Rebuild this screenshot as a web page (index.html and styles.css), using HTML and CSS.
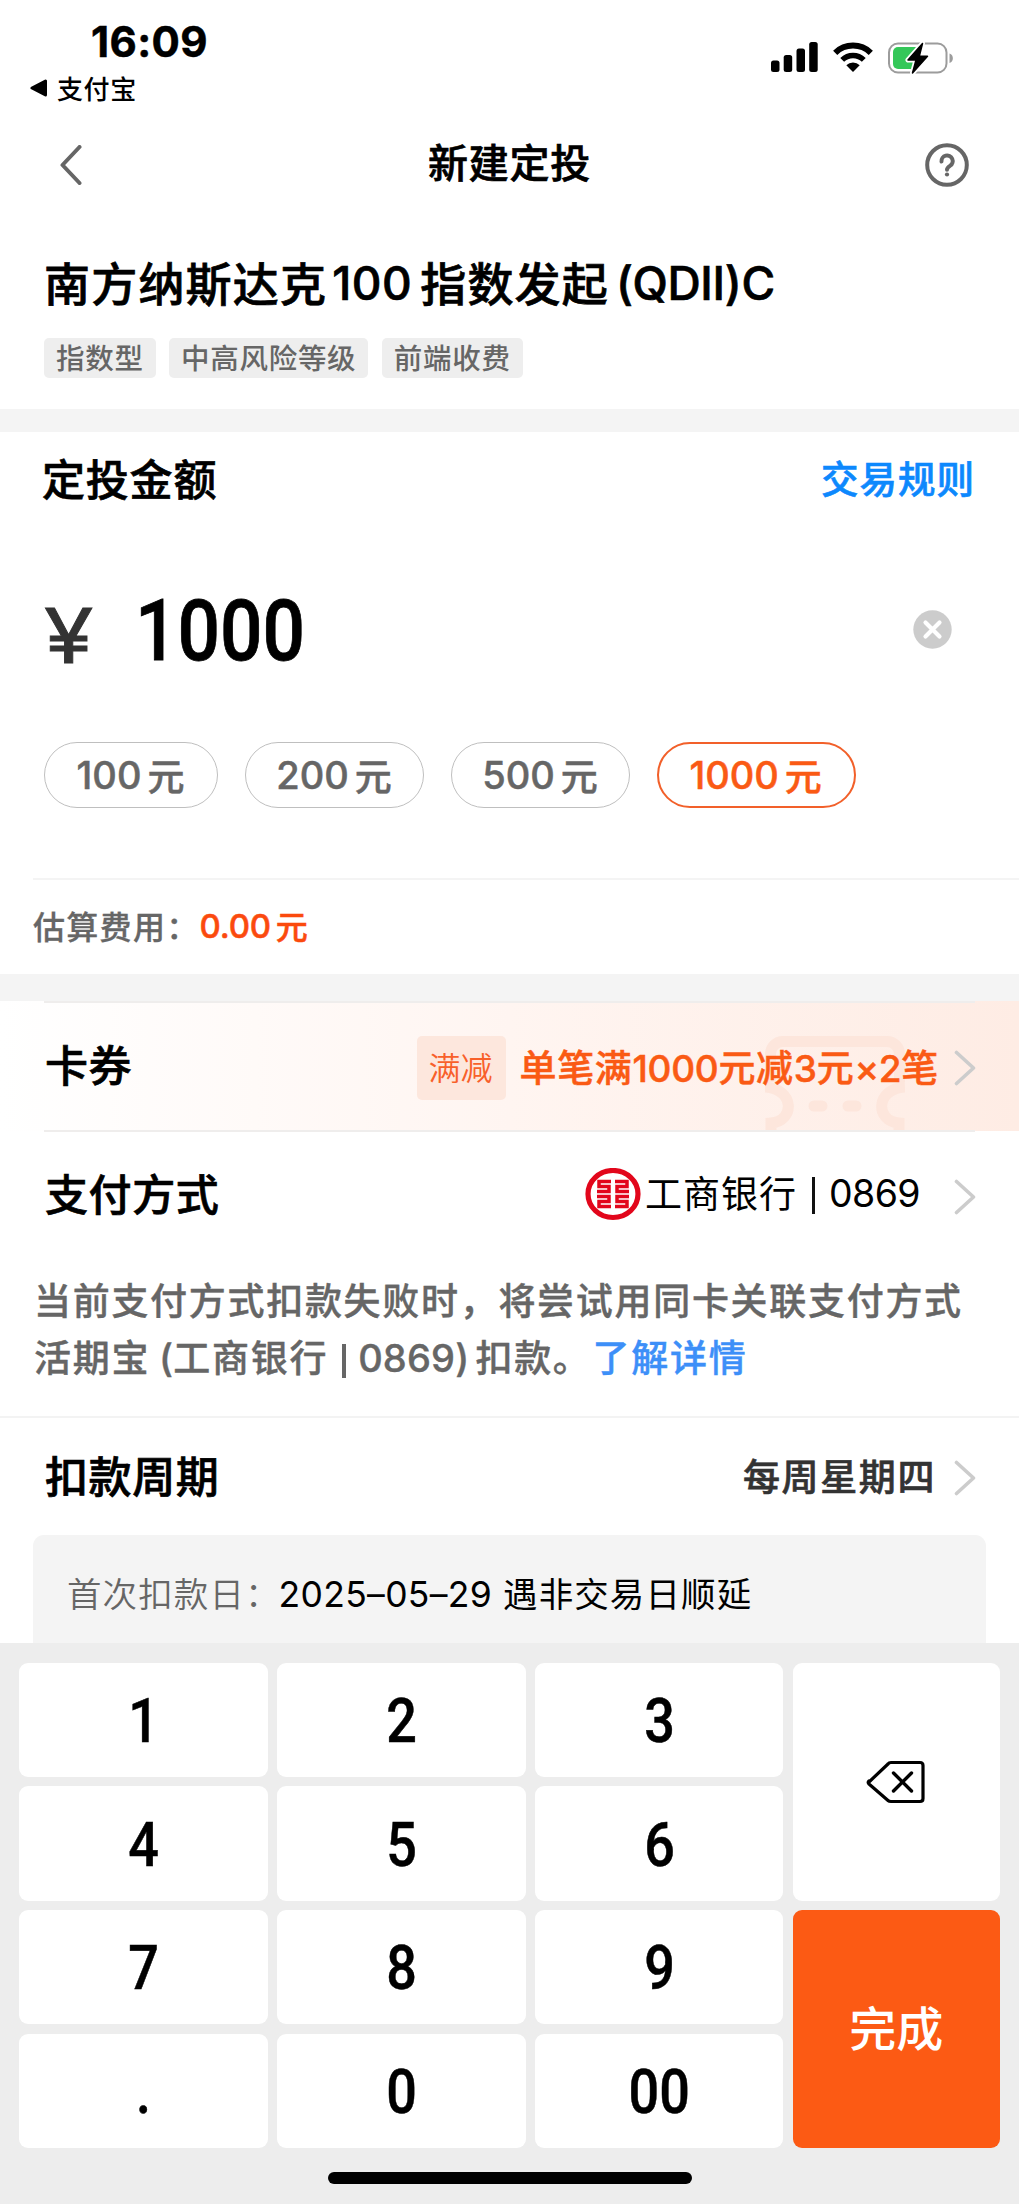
FILE: index.html
```html
<!DOCTYPE html>
<html lang="zh-CN">
<head>
<meta charset="utf-8">
<title>新建定投</title>
<link rel="stylesheet" href="styles.css">
</head>
<body>
<div class="screen">
  <header class="status">
    <div class="status-left">
      <div class="clock">16:09</div>
      <div class="return-app">
        <svg width="18" height="18" viewBox="0 0 18 18"><path d="M2 9 15.500 2v14z" fill="#000" stroke="#000" stroke-width="3" stroke-linejoin="round"/></svg>
        <span>支付宝</span>
      </div>
    </div>
    <div class="status-icons">
      <svg width="47" height="30" viewBox="0 0 47 30"><rect x="0" y="18.500" width="8.500" height="11.500" rx="2.500"/><rect x="12.700" y="13" width="8.500" height="17" rx="2.500"/><rect x="25.500" y="6.500" width="8.500" height="23.500" rx="2.500"/><rect x="38.200" y="0" width="8.500" height="30" rx="2.500"/></svg>
      <svg width="40" height="30" viewBox="0 0 40 30"><g fill="none" stroke="#000" stroke-width="6"><path d="M2.200 10.800A25.500 25.500 0 0 1 37.800 10.800"/><path d="M9.200 17.900A15.500 15.500 0 0 1 30.800 17.900" stroke-width="5.500"/></g><path d="M20 30 13.300 23.300A9.500 9.500 0 0 1 26.700 23.300z"/></svg>
      <svg width="66" height="34" viewBox="0 0 66 34"><rect x="1" y="1.500" width="57.500" height="29" rx="9" fill="none" stroke="#9c9c9c" stroke-width="2"/><path d="M61.500 11.500c4.500 1 4.500 8.500 0 9.500z" fill="#9c9c9c"/><path d="M10 5H28L24.500 27H10a5 5 0 0 1-5-5v-12a5 5 0 0 1 5-5z" fill="#34c759"/><path d="M34.500 1.500 20 18h8L24.500 31 39.500 14.300h-8.200z" fill="#000" stroke="#fff" stroke-width="5" stroke-linejoin="round" paint-order="stroke"/><path d="M34.500 1.500 20 18h8L24.500 31 39.500 14.300h-8.200z" stroke="#000" stroke-width="1.500" stroke-linejoin="round"/></svg>
    </div>
  </header>

  <nav class="nav">
    <svg width="22" height="40" viewBox="0 0 22 40"><path d="M19.500 2 2.500 20l17 18" fill="none" stroke="#666" stroke-width="4" stroke-linecap="round" stroke-linejoin="round"/></svg>
    <h1>新建定投</h1>
    <svg width="44" height="44" viewBox="0 0 44 44"><circle cx="22" cy="22" r="19.800" fill="none" stroke="#666" stroke-width="4"/><path d="M16.500 18.500a5.600 5.600 0 1 1 8.700 4.200c-2 1.300-3.200 2-3.200 4" fill="none" stroke="#666" stroke-width="4" stroke-linecap="round"/><circle cx="22" cy="31.500" r="2.100" fill="#666"/></svg>
  </nav>

  <section class="fund">
    <h2><span>南方纳斯达克</span><span class="num">100</span><span>指数发起</span><span class="code">(QDII)C</span></h2>
    <div class="tags"><span>指数型</span><span>中高风险等级</span><span>前端收费</span></div>
  </section>

  <section class="amount">
    <div class="amount-head"><h3>定投金额</h3><a>交易规则</a></div>
    <div class="amount-input">
      <span class="yen">¥</span><span class="value">1000</span>
      <svg width="39" height="39" viewBox="0 0 39 39"><circle cx="19.500" cy="19.500" r="19.200" fill="#ccc"/><path d="M12.500 12.500l14 14m0-14l-14 14" stroke="#fff" stroke-width="4.200" stroke-linecap="round"/></svg>
    </div>
    <div class="chips">
      <span class="chip"><b>100</b>元</span>
      <span class="chip wide"><b>200</b>元</span>
      <span class="chip wide"><b>500</b>元</span>
      <span class="chip active"><b>1000</b>元</span>
    </div>
    <div class="fee"><span>估算费用：</span><span class="fee-value"><b>0.00</b>元</span></div>
  </section>

  <section class="coupon">
    <svg class="ticket" width="140" height="95" viewBox="0 0 140 95"><g fill="none" stroke="#fde6dc" stroke-width="11"><path d="M5.500 46V18A12.500 12.500 0 0 1 18 5.500H122A12.500 12.500 0 0 1 134.500 18V46"/><path d="M0 51C30 53 30 85 6 87V95M140 51C110 53 110 85 134 87V95"/><path d="M49 70h8M83 70h8" stroke-linecap="round"/></g></svg>
    <h3>卡券</h3>
    <span class="badge">满减</span>
    <span class="offer">单笔满<b>1000</b>元减<b>3</b>元<b>×2</b>笔</span>
    <svg class="chev" width="22" height="36" viewBox="0 0 22 36"><path d="M2.500 2.500 19.500 18 2.500 33.500" /></svg>
  </section>

  <section class="pay">
    <div class="row">
      <h3>支付方式</h3>
      <svg class="bank" width="56" height="54" viewBox="0 0 56 54"><ellipse cx="28" cy="26" rx="25" ry="23.500" fill="none" stroke="#e2061b" stroke-width="5.200"/><g fill="none" stroke="#e2061b" stroke-width="3.500"><path d="M26 13.500H14V18.500H24V23.500H12M30 13.500H42V18.500H32V23.500H44M12 28.500H24V33.500H14V38.500H26M44 28.500H32V33.500H42V38.500H30"/></g></svg>
      <span class="bank-name">工商银行</span><i class="sep"></i><span class="card-no">0869</span>
      <svg class="chev" width="22" height="36" viewBox="0 0 22 36"><path d="M2.500 2.500 19.500 18 2.500 33.500" /></svg>
    </div>
    <p>当前支付方式扣款失败时，将尝试用同卡关联支付方式<br>活期宝<b class="open">(</b>工商银行<i class="sep small"></i><b class="digits">0869)</b>扣款。<a>了解详情</a></p>
  </section>

  <section class="cycle">
    <div class="row">
      <h3>扣款周期</h3>
      <span class="day">每周星期四</span>
      <svg class="chev" width="22" height="36" viewBox="0 0 22 36"><path d="M2.500 2.500 19.500 18 2.500 33.500" /></svg>
    </div>
    <div class="first"><span class="label">首次扣款日：</span><span class="date">2025–05–29</span><span>遇非交易日顺延</span></div>
  </section>

  <footer class="keyboard">
    <div class="keys">
      <button><span>1</span></button><button><span>2</span></button><button><span>3</span></button>
      <button class="del"><svg width="60" height="44" viewBox="0 0 60 44"><path d="M3 22 22 4Q23 2.500 25 2.500H54Q57 2.500 57 5.500V38.500Q57 41.500 54 41.500H25Q23 41.500 22 40.500L3 24Q1.500 22.500 3 21z" fill="none" stroke="#000" stroke-width="3.200" stroke-linejoin="round"/><path d="M27.500 13 45.500 31M45.500 13 27.500 31" stroke="#000" stroke-width="3.400" stroke-linecap="round"/></svg></button>
      <button><span>4</span></button><button><span>5</span></button><button><span>6</span></button>
      <button><span>7</span></button><button><span>8</span></button><button><span>9</span></button>
      <button class="done">完成</button>
      <button><span>.</span></button><button><span>0</span></button><button><span>00</span></button>
    </div>
    <div class="home"></div>
  </footer>
</div>
</body>
</html>
```

FILE: styles.css
```css
* { box-sizing: border-box; margin: 0; padding: 0; }
body {
  background: #fff; color: #000;
  font-family: "Noto Sans CJK SC", sans-serif;
  font-weight: 500;
}
svg { display: block; flex: none; }
b { font-family: Inter, sans-serif; font-weight: 500; }
h1, h2, h3 { font-weight: 500; white-space: nowrap; -webkit-text-stroke: 0.7px; }
.screen { width: 1019px; height: 2204px; overflow: hidden; display: flex; flex-direction: column; }

.status { height: 120px; display: flex; justify-content: space-between; padding: 0 65px 0 30px; }
.clock { font: 700 42px/48px Inter, sans-serif; padding: 18px 0 0 61px; letter-spacing: 0.4px; -webkit-text-stroke: 0.5px; }
.return-app { display: flex; align-items: center; gap: 9px; height: 44px; font-size: 26px; letter-spacing: 0.6px; }
.return-app span { padding-bottom: 2px; }
.status-icons { display: flex; gap: 15px; padding-top: 42px; }

.nav { height: 90px; display: flex; align-items: center; justify-content: space-between; padding: 0 50px 0 60px; }
.nav h1 { font-size: 40px; letter-spacing: 0.8px; padding: 0 0 9px 12px; }

.fund { height: 222px; border-bottom: 23px solid #f4f4f4; padding: 37px 44px 0; flex: none; }
.fund h2 { display: flex; align-items: center; height: 68px; font-size: 46px; letter-spacing: 1.200px; }
.fund .num, .fund .code { font-family: Inter, sans-serif; padding-top: 4px; }
.fund .num { margin: 0 8px 0 5px; letter-spacing: 0.5px; }
.fund .code { margin-left: 7px; letter-spacing: -0.4px; }
.tags { display: flex; gap: 13.500px; margin-top: 23px; }
.tags span { height: 40px; line-height: 37px; padding: 0 12px; border-radius: 5px; background: #eee; color: #666; font-size: 28.500px; letter-spacing: 0.7px; }

.amount { height: 569px; flex: none; border-bottom: 27px solid #f4f4f4; }
.amount-head { height: 94px; display: flex; align-items: center; justify-content: space-between; padding: 0 44px 5px 42px; }
.amount h3 { font-size: 43px; letter-spacing: 0.8px; }
.amount-head a { font-size: 37.500px; letter-spacing: 1px; color: #0d88fd; -webkit-text-stroke: 0.6px; }
.amount-input { height: 216px; display: flex; align-items: center; padding: 0 67px 10px 44px; }
.yen { font: 400 76px/1 Inter, sans-serif; color: #333; width: 91px; padding-top: 11px; transform: scaleX(1.180); transform-origin: left; -webkit-text-stroke: 0.8px; }
.value { font: 500 86px/1 Roboto, sans-serif; -webkit-text-stroke: 0.8px; transform: scaleX(0.87); transform-origin: left; flex: 1; padding-top: 3px; }
.chips { display: flex; padding-left: 44px; height: 136px; }
.chip { width: 174px; height: 66px; margin-right: 27.300px; display: flex; align-items: center; justify-content: center; gap: 6px; border: 1.500px solid #bfbfbf; border-radius: 33px; font-size: 37px; color: #666; -webkit-text-stroke: 0.5px; padding-right: 1px; }
.chip.wide { width: 178.600px; }
.chip b { font-size: 38px; }
.chip.active { width: 199px; color: #fa5a14; border: 2px solid #f2602a; padding-right: 2px; }
.fee { margin-left: 33px; border-top: 2px solid #f4f4f4; height: 96px; padding-bottom: 5px; display: flex; align-items: center; font-size: 32px; letter-spacing: 1.300px; color: #666; -webkit-text-stroke: 0.3px; }
.fee-value { display: flex; align-items: center; gap: 5px; color: #fb4a0d; -webkit-text-stroke: 0.5px; }
.fee-value b { font-size: 33px; letter-spacing: -0.2px; padding-top: 3px; }

.row, .coupon { display: flex; align-items: center; padding: 0 43px 0 45px; }
.row h3, .coupon h3 { font-size: 43px; letter-spacing: 0.6px; margin-right: auto; padding-bottom: 6px; }
.chev { margin-top: 3px; }
.chev path { fill: none; stroke: #ccc; stroke-width: 3.600; stroke-linecap: round; stroke-linejoin: round; }
.coupon { height: 130px; flex: none; position: relative; background: linear-gradient(90deg, #fff, #fff5f1 50%, #feece4); }
.coupon::before, .coupon::after { content: ""; position: absolute; left: 44px; right: 44px; top: 0; height: 2px; background: #efedec; }
.coupon::after { top: auto; bottom: -1px; }
.ticket { position: absolute; left: 765px; top: 35px; }
.badge { position: relative; width: 89px; height: 64px; line-height: 61px; text-align: center; padding-right: 3px; border-radius: 5px; background: #fde7dd; color: #f8602a; font-size: 32px; font-weight: 350; margin: 3px 13px 0 0; }
.offer { position: relative; font-size: 37px; letter-spacing: 0.7px; color: #fa5a14; white-space: nowrap; margin-right: 15px; -webkit-text-stroke: 0.5px; }
.offer b { letter-spacing: -0.3px; }

.pay { height: 287px; flex: none; border-bottom: 2px solid #f3f3f3; }
.pay .row { height: 128px; }
.bank { margin-right: 4px; }
.bank-name { font-size: 37px; letter-spacing: 1px; font-weight: 400; padding-bottom: 6px; }
.sep { width: 3px; height: 37px; background: #111; margin: 0 14px 0 15px; }
.card-no { font: 400 37.500px/1 Inter, sans-serif; letter-spacing: -0.6px; margin-right: 34px; padding-bottom: 3px; }
.pay p { font-size: 37px; letter-spacing: 1.700px; line-height: 57px; color: #666; padding: 12px 0 0 34px; white-space: nowrap; -webkit-text-stroke: 0.4px; }
.pay b { font-size: 38px; letter-spacing: 0.2px; }
.open { margin-left: 9px; }
.sep.small { display: inline-block; width: 4px; height: 34px; background: #666; vertical-align: -6px; margin: 0 12px 0 14px; }
.pay .digits { margin-right: 6px; }
.pay a { color: #3d8ff8; margin-left: 1px; }

.cycle { flex: 1; min-height: 0; overflow: hidden; }
.cycle .row { height: 117px; }
.day { font-size: 37px; letter-spacing: 1.600px; color: #333; margin-right: 18px; padding-bottom: 3px; -webkit-text-stroke: 0.6px; }
.first { margin: 0 33px; height: 130px; padding: 0 0 16px 34px; background: #f4f4f4; border-radius: 11px; display: flex; align-items: center; font-size: 34.500px; letter-spacing: 1.100px; font-weight: 400; white-space: nowrap; }
.first .label { color: #666; font-weight: 350; margin-right: -2px; }
.date { font: 400 35.500px/1 Inter, sans-serif; letter-spacing: 0.3px; margin-right: 11px; padding-top: 5px; }

.keyboard { height: 561px; flex: none; background: #ededed; padding: 19.700px 18.500px 0 19px; }
.keys { display: grid; grid-template-columns: 249px 249px 248px 207.500px; grid-template-rows: repeat(4, 114.300px); column-gap: 9.200px; row-gap: 9.400px; grid-auto-flow: row; }
.keys button { border: 0; border-radius: 9px; background: #fff; font: 500 62px/1 Roboto, sans-serif; color: #000; }
.keys span { display: inline-block; transform: scaleX(0.87); padding-top: 2px; -webkit-text-stroke: 0.5px; }
.keys .del { grid-row: span 2; display: flex; align-items: center; justify-content: center; }
.keys .done { grid-row: span 2; background: #fc5a14; color: #fff; font: 500 47px/1 "Noto Sans CJK SC", sans-serif; padding-bottom: 7px; }
.home { width: 364px; height: 12px; border-radius: 6px; background: #000; margin: 24px auto 0; }
```
